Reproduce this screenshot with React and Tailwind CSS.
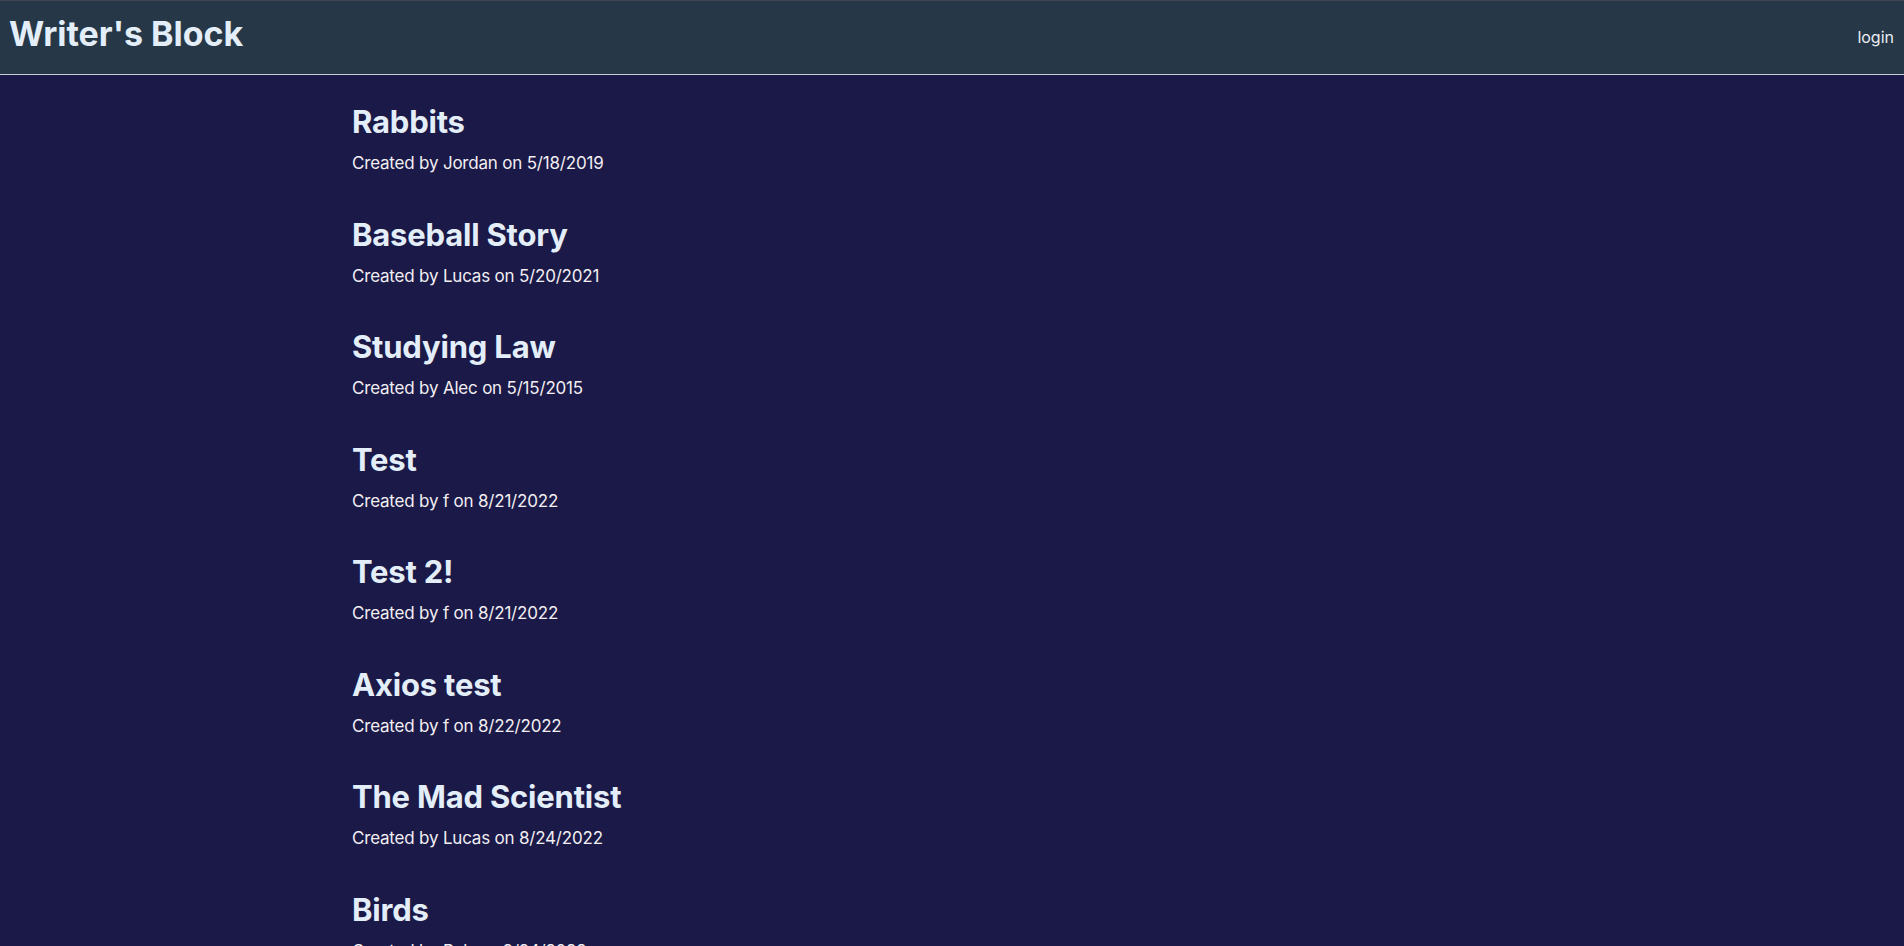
const stories = [
  { title: 'Rabbits', author: 'Jordan', date: '5/18/2019' },
  { title: 'Baseball Story', author: 'Lucas', date: '5/20/2021' },
  { title: 'Studying Law', author: 'Alec', date: '5/15/2015' },
  { title: 'Test', author: 'f', date: '8/21/2022' },
  { title: 'Test 2!', author: 'f', date: '8/21/2022' },
  { title: 'Axios test', author: 'f', date: '8/22/2022' },
  { title: 'The Mad Scientist', author: 'Lucas', date: '8/24/2022' },
  { title: 'Birds', author: 'Rob', date: '8/24/2022' },
];

export default function App() {
  return (
    <div className="min-h-screen bg-[#1a1947] font-['Inter',sans-serif]">
      {/* Header */}
      <header className="h-[75px] bg-[#263747] border-t border-[#3f4852] border-b border-b-[#c9ccd0] flex items-center justify-between pl-[9px] pr-[10px]">
        <a href="#" className="mb-[8px] text-[34px] font-bold text-[#e3eef9]">Writer's Block</a>
        <a href="#" className="mb-[2px] text-[16px] text-[#e9eef3]">login</a>
      </header>

      <main className="max-w-[1200px] mx-auto pt-[27px]">
        {stories.map((s, i) => (
          <div key={i} className="h-[112.5px]">
            <h2 className="text-[31px] leading-[40px] font-bold text-[#e3eef9] tracking-[-0.2px]">{s.title}</h2>
            <p className="mt-[8px] text-[17px] leading-[26px] text-[#f2eef2] tracking-[-0.2px]">
              Created by {s.author} on {s.date}
            </p>
          </div>
        ))}
      </main>
    </div>
  );
}
